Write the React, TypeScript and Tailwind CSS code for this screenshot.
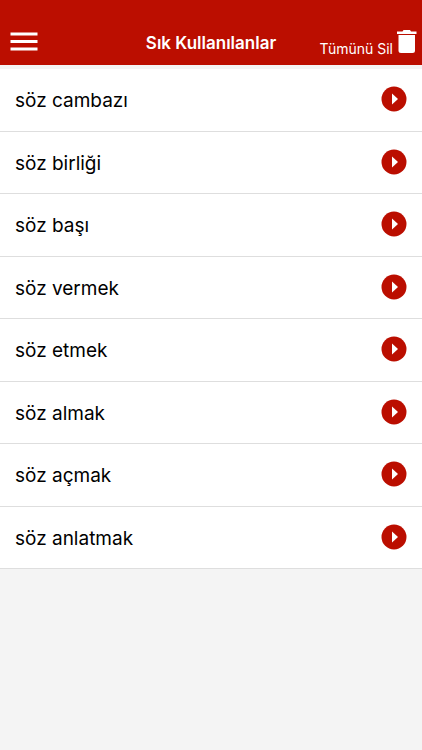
import React from 'react';

const phrases = [
  'söz cambazı',
  'söz birliği',
  'söz başı',
  'söz vermek',
  'söz etmek',
  'söz almak',
  'söz açmak',
  'söz anlatmak',
];

const App: React.FC = () => {
  return (
    <div className="min-h-screen bg-[#f4f4f4] font-['Inter','Liberation_Sans',sans-serif] text-black">
      {/* Header */}
      <header className="grid grid-cols-[1fr_auto_1fr] items-center h-[65px] pt-5 px-[5px] bg-[#bb0e00] text-white">
        <button type="button" aria-label="Menü" className="justify-self-start px-[5px] pb-[2px]">
          <svg className="block w-7 h-5" viewBox="0 0 28 20" fill="currentColor">
            <path d="M.5.500h27v3h-27zM.5 8h27v3h-27zM.5 15.500h27v3h-27z" />
          </svg>
        </button>
        <h1 className="text-[17px] leading-6 font-semibold">Sık Kullanılanlar</h1>
        <button type="button" className="flex items-end gap-1 justify-self-end">
          <span className="text-sm leading-4 whitespace-nowrap">Tümünü Sil</span>
          <svg className="block w-5 h-6 mb-1" viewBox="0 0 20 24" fill="currentColor">
            <path d="M0 2.500h5.500l1-1.500h6.500l1 1.500h5.500V5H0zM1.500 6h16.500v15.500a2.500 2.500 0 0 1-2.500 2.500h-11.500a2.500 2.500 0 0 1-2.500-2.500z" />
          </svg>
        </button>
      </header>

      {/* Phrase list */}
      <ul className="mt-1 bg-white">
        {phrases.map((phrase) => (
          <li key={phrase} className="h-[63px] even:h-[62px] border-b border-[#dedede]">
            <a href="#" className="flex items-center justify-between h-full px-[15px]">
              <span className="pt-[2px] text-[19px] leading-6">{phrase}</span>
              <svg className="block w-[26px] h-[26px] mb-[2px]" viewBox="0 0 26 26">
                <circle cx="13" cy="13" r="12.500" fill="#bb0e00" />
                <path d="M11 7.500 17 13l-6 5.500z" fill="#fff" />
              </svg>
            </a>
          </li>
        ))}
      </ul>
    </div>
  );
};

export default App;
